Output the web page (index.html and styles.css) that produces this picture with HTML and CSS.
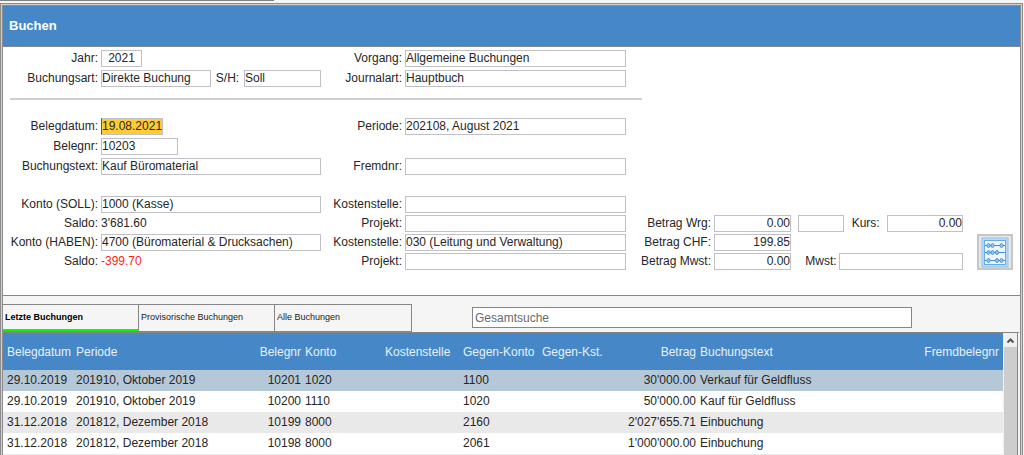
FILE: index.html
```html
<!DOCTYPE html>
<html lang="de">
<head>
<meta charset="utf-8">
<title>Buchen</title>
<link rel="stylesheet" href="styles.css">
</head>
<body>
<div class="strip"></div>
<main class="frame">
  <h1 class="title">Buchen</h1>
  <form class="form">
    <div class="grid">
      <label for="jahr">Jahr:</label>
      <div class="cell"><input id="jahr" class="w-year center" value="2021"></div>
      <label for="vorgang">Vorgang:</label>
      <input id="vorgang" value="Allgemeine Buchungen">
      <label class="first" for="art">Buchungsart:</label>
      <div class="cell split"><input id="art" class="w-type" value="Direkte Buchung"><label for="sh">S/H:</label><input id="sh" class="w-small" value="Soll"></div>
      <label for="journal">Journalart:</label>
      <input id="journal" value="Hauptbuch">
    </div>
    <div class="grid rule-row"><hr class="rule"></div>
    <div class="grid">
      <label for="datum">Belegdatum:</label>
      <div class="cell"><input id="datum" class="w-date active" value="19.08.2021"></div>
      <label for="periode">Periode:</label>
      <input id="periode" value="202108, August 2021">
      <label class="first" for="nr">Belegnr:</label>
      <div class="cell"><input id="nr" class="w-small" value="10203"></div>
      <label class="first" for="text">Buchungstext:</label>
      <input id="text" value="Kauf Büromaterial">
      <label for="fremd">Fremdnr:</label>
      <input id="fremd">
    </div>
    <div class="grid accounts">
      <label for="soll">Konto (SOLL):</label>
      <input id="soll" value="1000 (Kasse)">
      <label for="kst1">Kostenstelle:</label>
      <input id="kst1">
      <label class="first" for="saldo1">Saldo:</label>
      <output id="saldo1">3'681.60</output>
      <label for="projekt1">Projekt:</label>
      <input id="projekt1">
      <label for="wrg">Betrag Wrg:</label>
      <div class="cell split"><input id="wrg" class="w-small right" value="0.00"><input class="w-currency" aria-label="Währung"><label for="kurs">Kurs:</label><input id="kurs" class="w-rate right" value="0.00"></div>
      <label class="first" for="haben">Konto (HABEN):</label>
      <input id="haben" value="4700 (Büromaterial &amp; Drucksachen)">
      <label for="kst2">Kostenstelle:</label>
      <input id="kst2" value="030 (Leitung und Verwaltung)">
      <label for="chf">Betrag CHF:</label>
      <div class="cell"><input id="chf" class="w-small right" value="199.85"></div>
      <label class="first" for="saldo2">Saldo:</label>
      <output id="saldo2" class="negative">-399.70</output>
      <label for="projekt2">Projekt:</label>
      <input id="projekt2">
      <label for="mwstbetrag">Betrag Mwst:</label>
      <div class="cell split"><input id="mwstbetrag" class="w-small right" value="0.00"><label class="push" for="mwst">Mwst:</label><input id="mwst" class="w-tax"></div>
      <button class="calc" type="button" aria-label="Rechner">
        <svg width="28" height="31" viewBox="0 0 28 31" fill="none" stroke="#4a90d9">
          <rect x="1" y="1" width="26" height="29" fill="#b9d9f5" stroke="#8fc1ee"/>
          <rect x="3.500" y="3.500" width="21" height="24" fill="#eef6fd" stroke="#6aaae4"/>
          <path d="M4 8.500h20M4 15.500h20M4 23.500h20"/>
          <g fill="#9ccaf2">
            <ellipse cx="7.500" cy="8.500" rx="1.500" ry="2"/><ellipse cx="11.500" cy="8.500" rx="1.500" ry="2"/><ellipse cx="20.500" cy="8.500" rx="1.500" ry="2"/>
            <ellipse cx="7.500" cy="15.500" rx="1.500" ry="2"/><ellipse cx="11.500" cy="15.500" rx="1.500" ry="2"/><ellipse cx="16" cy="15.500" rx="1.500" ry="2"/>
            <ellipse cx="7.500" cy="23.500" rx="1.500" ry="2"/><ellipse cx="16" cy="23.500" rx="1.500" ry="2"/><ellipse cx="20.500" cy="23.500" rx="1.500" ry="2"/>
          </g>
        </svg>
      </button>
    </div>
  </form>
  <div class="toolbar">
    <div class="tabs" role="tablist">
      <button class="tab selected" role="tab" aria-selected="true">Letzte Buchungen</button>
      <button class="tab" role="tab" aria-selected="false">Provisorische Buchungen</button>
      <button class="tab" role="tab" aria-selected="false">Alle Buchungen</button>
    </div>
    <input class="search" type="text" placeholder="Gesamtsuche" aria-label="Gesamtsuche">
  </div>
  <div class="list">
    <div class="viewport">
      <table class="table">
        <colgroup><col class="c-date"><col class="c-period"><col class="c-nr"><col class="c-account"><col class="c-cost"><col class="c-contra"><col class="c-contra-cost"><col class="c-amount"><col><col class="c-foreign"></colgroup>
        <thead>
          <tr><th>Belegdatum</th><th>Periode</th><th class="right">Belegnr</th><th>Konto</th><th>Kostenstelle</th><th>Gegen-Konto</th><th>Gegen-Kst.</th><th class="right">Betrag</th><th>Buchungstext</th><th class="right">Fremdbelegnr</th></tr>
        </thead>
        <tbody>
          <tr class="current"><td>29.10.2019</td><td>201910, Oktober 2019</td><td class="right">10201</td><td>1020</td><td></td><td>1100</td><td></td><td class="right">30'000.00</td><td>Verkauf für Geldfluss</td><td></td></tr>
          <tr><td>29.10.2019</td><td>201910, Oktober 2019</td><td class="right">10200</td><td>1110</td><td></td><td>1020</td><td></td><td class="right">50'000.00</td><td>Kauf für Geldfluss</td><td></td></tr>
          <tr><td>31.12.2018</td><td>201812, Dezember 2018</td><td class="right">10199</td><td>8000</td><td></td><td>2160</td><td></td><td class="right">2'027'655.71</td><td>Einbuchung</td><td></td></tr>
          <tr><td>31.12.2018</td><td>201812, Dezember 2018</td><td class="right">10198</td><td>8000</td><td></td><td>2061</td><td></td><td class="right">1'000'000.00</td><td>Einbuchung</td><td></td></tr>
          <tr><td colspan="10"></td></tr>
        </tbody>
      </table>
    </div>
    <div class="scrollbar">
      <button class="up" type="button" aria-label="Nach oben"><svg width="7" height="5" viewBox="0 0 7 5" fill="none" stroke="#505050" stroke-width="2"><path d="M.5 4.500l3-3 3 3"/></svg></button>
      <div class="thumb"></div>
    </div>
  </div>
</main>
</body>
</html>
```
FILE: styles.css
```css
* { box-sizing: border-box; }

body {
  margin: 0;
  height: 100vh;
  padding-right: 1px;
  display: flex;
  flex-direction: column;
  overflow: hidden;
  background: #f5f5f5;
  color: #262626;
  font: 12px/17px "Liberation Sans", Arial, sans-serif;
}

input, button { font: inherit; color: inherit; border-radius: 0; }

.strip {
  flex: none;
  width: 274px;
  height: 1px;
  margin-bottom: 2px;
  background: #808080;
}

.frame {
  flex: 1;
  min-height: 0;
  display: flex;
  flex-direction: column;
  border: 3px double #8c8c8c;
  border-bottom: 0;
  background: #d0d0d0;
}

.title {
  flex: none;
  margin: 0;
  padding: 0 6px;
  border-bottom: 1px solid #7f8790;
  background: #4688c7;
  color: #fff;
  font-size: 13px;
  line-height: 40px;
}

.form {
  flex: none;
  padding: 3px 7px 25px 0;
  border-bottom: 1px solid #868686;
  background: #fff;
}

.grid {
  display: grid;
  grid-template-columns: 95px minmax(0, 220fr) 78px minmax(0, 221fr) 82px 249px 47px;
  grid-auto-rows: 17px;
  gap: 3px;
}

.grid > label { text-align: right; white-space: nowrap; }
.first { grid-column: 1; }
.accounts { row-gap: 2px; margin-top: 21px; }

.grid input {
  width: 100%;
  min-width: 0;
  height: 17px;
  padding: 0;
  border: 1px solid #c0c0c6;
  background: #fff;
}

.cell { display: flex; }
.split { justify-content: space-between; }
.push { margin-left: 12px; }
.grid .w-year { width: 41px; }
.grid .w-date { width: 62px; }
.grid .w-small { width: 77px; }
.grid .w-type { width: 110px; }
.grid .w-currency { width: 46px; }
.grid .w-rate { width: 76px; }
.grid .w-tax { width: 124px; }
.center { text-align: center; }
.right { text-align: right; }
.grid .active { background: #ffcd33; border-left-color: #4a5578; }
.negative { color: #f22; }

.rule-row { grid-auto-rows: auto; }
.rule {
  grid-column: 1 / 5;
  width: auto;
  margin: 11px -16px 18px 7px;
  border: 0;
  border-top: 2px solid #cfcfcf;
}

.calc {
  grid-column: 7;
  grid-row: 3 / 5;
  justify-self: end;
  display: grid;
  place-items: center;
  width: 36px;
  height: 36px;
  padding: 0;
  border: 2px solid #c6c6c6;
  background: #e6e6e6;
}

.toolbar {
  flex: none;
  display: flex;
  align-items: flex-start;
  gap: 60px;
  height: 36px;
  padding-top: 8px;
  background: #f5f5f5;
}

.tabs { display: flex; flex: none; border: 1px solid #868686; border-left: 0; }

.tab {
  width: 136px;
  height: 26px;
  padding: 0 2px 2px;
  border: 0;
  border-right: 1px solid #868686;
  background: #f5f5f5;
  color: #222;
  font-size: 9px;
  text-align: left;
}
.tab:last-child { border-right: 0; }
.selected {
  padding-bottom: 0;
  border-bottom: 2px solid #0f0;
  color: #000;
  font-weight: bold;
}

.search {
  flex: 1;
  margin: 3px 108px 0 0;
  height: 21px;
  padding: 0 2px;
  border: 1px solid #868686;
  background: #fff;
}
.search::placeholder { color: #6a6a6a; }

.list {
  flex: 1;
  min-height: 0;
  display: flex;
  border-top: 1px solid #868686;
  border-right: 2px solid #f5f5f5;
}

.viewport { flex: 1; min-width: 0; overflow: hidden; background: #fff; }

.table {
  width: 100%;
  table-layout: fixed;
  border-collapse: collapse;
  line-height: 21px;
}
.table th, .table td { height: 21px; padding: 0 2px; white-space: nowrap; }
.table th { height: 37px; padding-top: 2px; color: #e8f1fa; font-weight: normal; text-align: left; }
.table .right { text-align: right; }
.table th:first-child, .table td:first-child { padding-left: 4px; }
.table th:last-child { padding-right: 4px; }
.table thead { background: #4688c7; }
.table tbody tr:nth-child(odd) { background: #e9e9e9; }
.table tbody tr.current { background: #b5c8d8; }
.c-date { width: 71px; }
.c-period { width: 160px; }
.c-nr { width: 69px; }
.c-account { width: 80px; }
.c-cost { width: 78px; }
.c-contra { width: 79px; }
.c-contra-cost { width: 80px; }
.c-amount { width: 78px; }
.c-foreign { width: 90px; }

.scrollbar {
  flex: none;
  display: flex;
  flex-direction: column;
  width: 15px;
  padding-left: 1px;
  border-right: 1px solid #868686;
  background: #f0f0f0;
}
.up { display: grid; place-items: center; height: 14px; padding: 0; border: 0; background: #f0f0f0; }
.thumb { flex: 1; background: #cdcdcd; }
```
